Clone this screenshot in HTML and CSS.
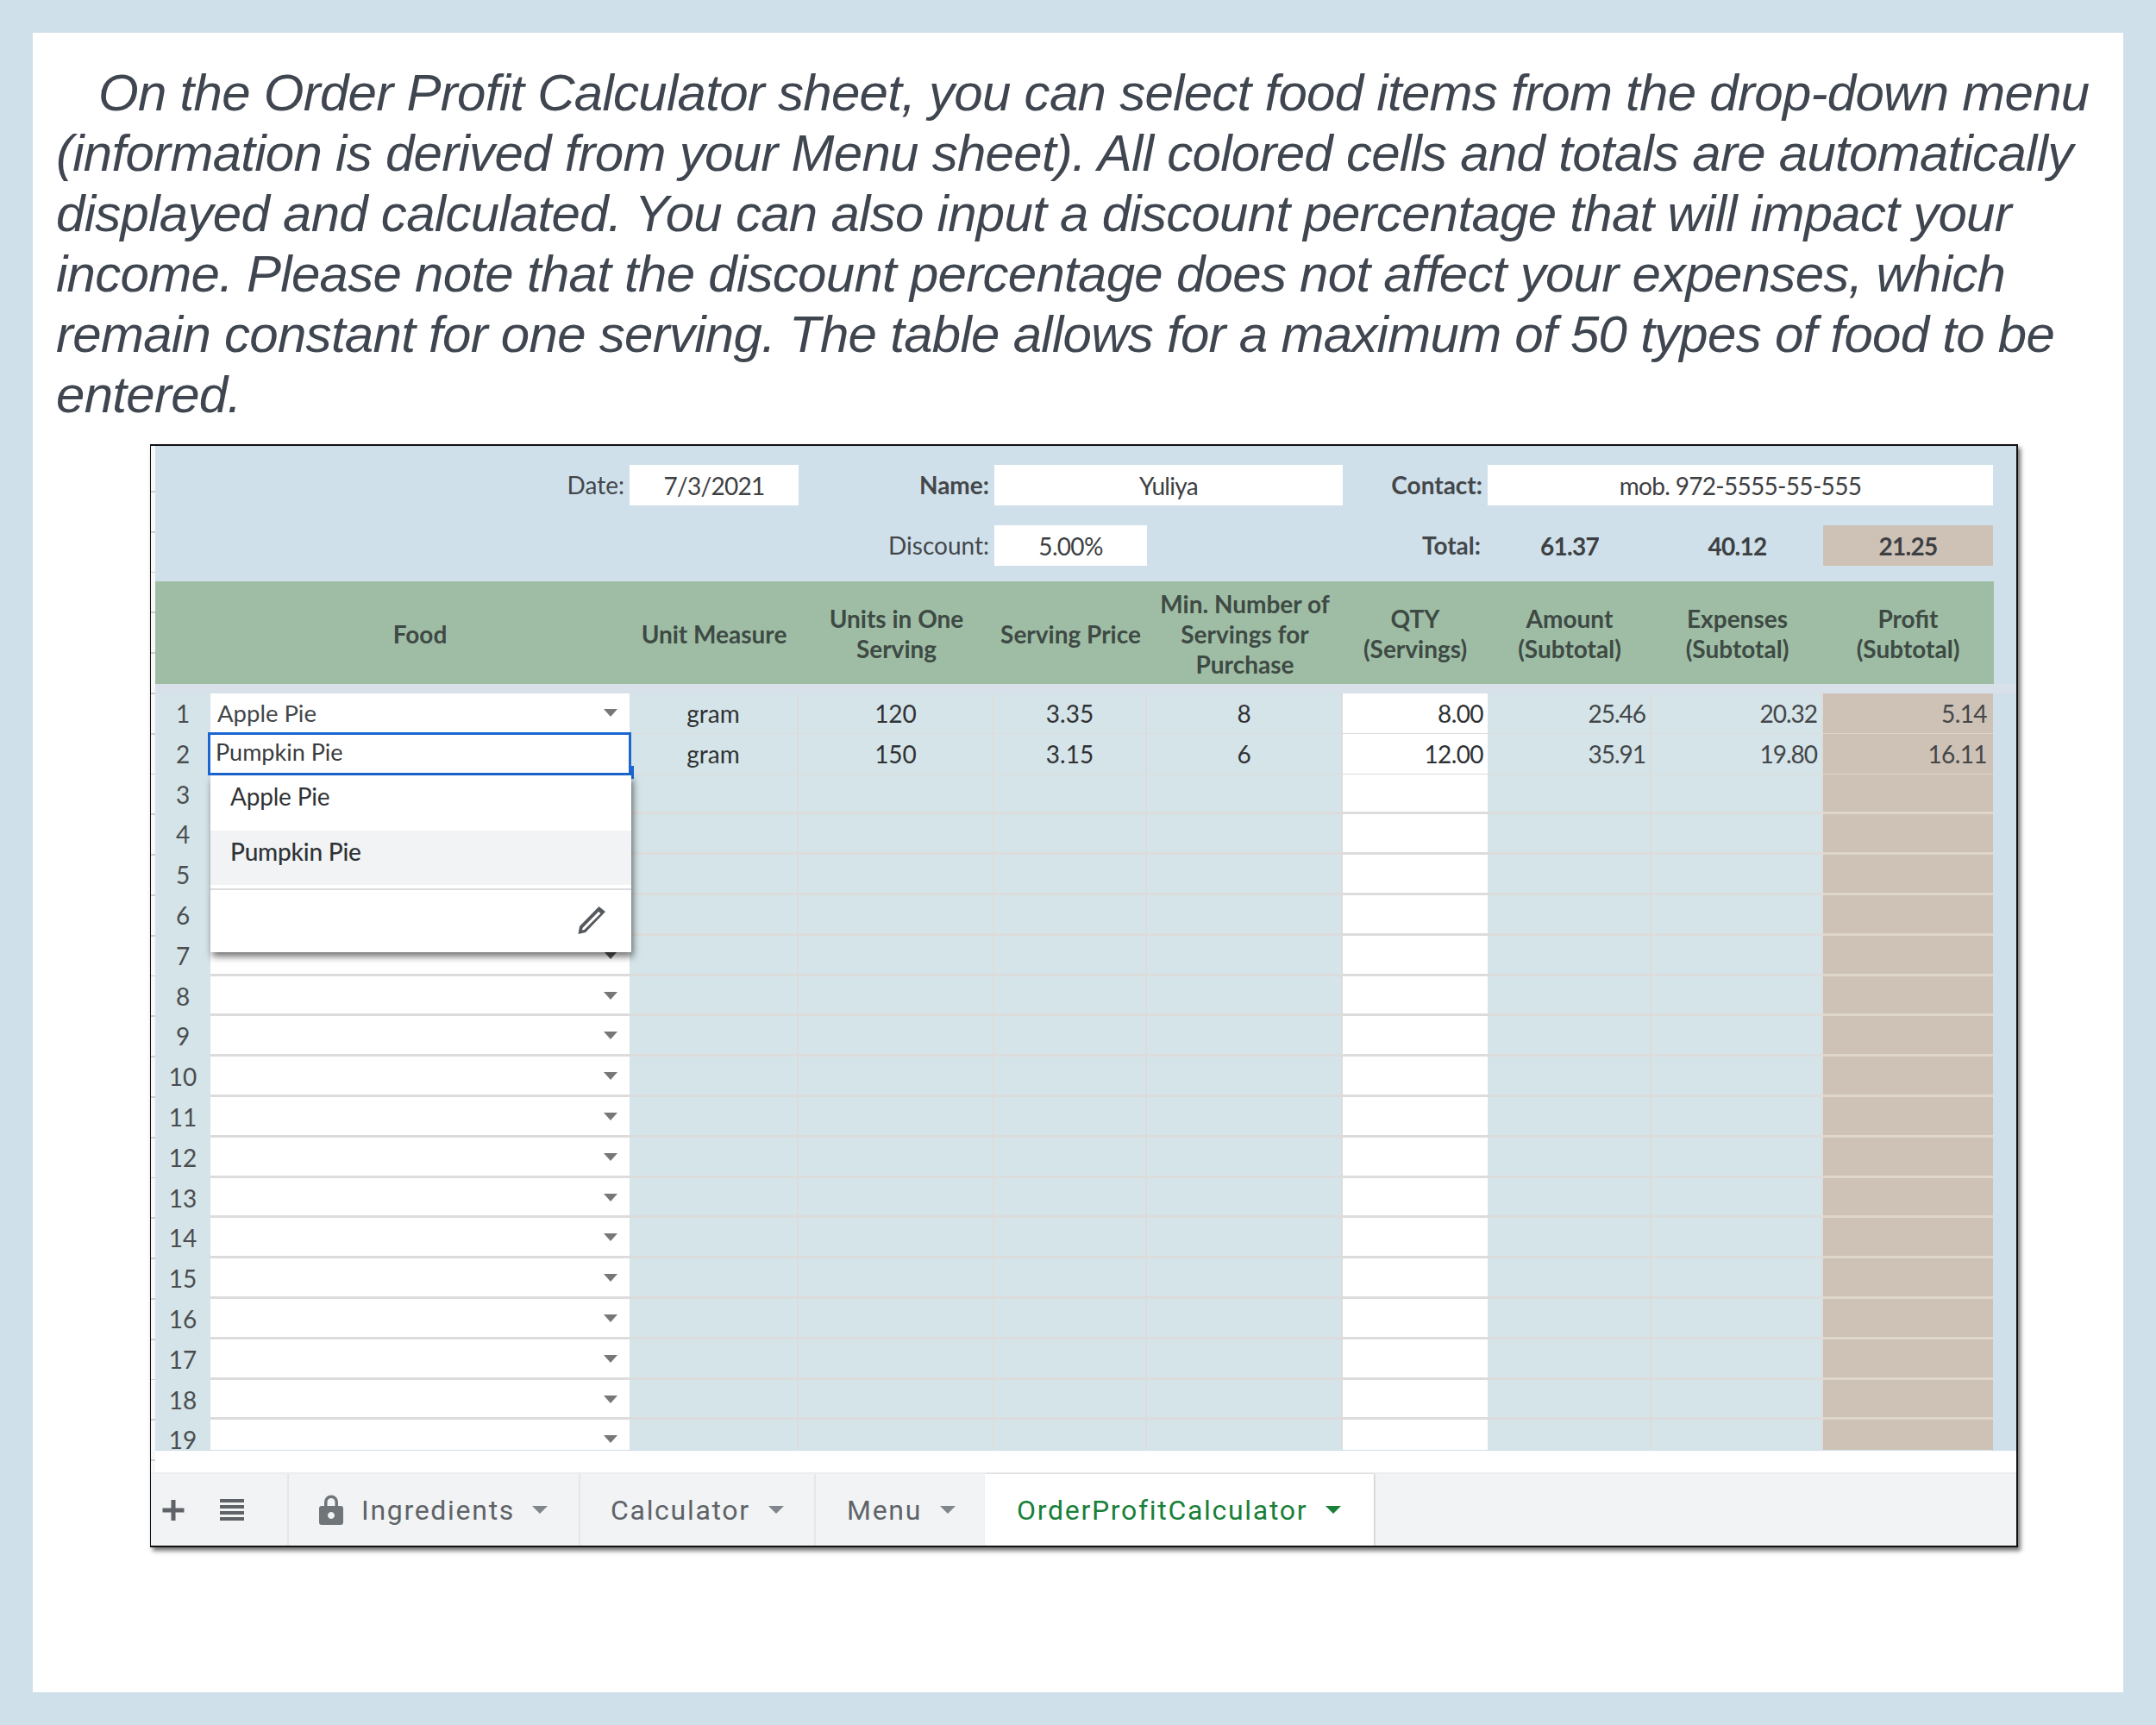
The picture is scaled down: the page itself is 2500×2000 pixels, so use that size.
FILE: index.html
```html
<!DOCTYPE html>
<html lang="en">
<head>
<meta charset="utf-8">
<title>Order Profit Calculator</title>
<link rel="stylesheet" href="styles.css">
</head>
<body>
<main class="page">
  <p class="intro">On the Order Profit Calculator sheet, you can select food items from the drop-down menu<br>(information is derived from your Menu sheet). All colored cells and totals are automatically<br>displayed and calculated. You can also input a discount percentage that will impact your<br>income. Please note that the discount percentage does not affect your expenses, which<br>remain constant for one serving. The table allows for a maximum of 50 types of food to be<br>entered.</p>
  <section class="window">
    <div class="sheet">
      <div class="grid info info-1">
        <div class="c2 label">Date:</div><div class="box">7/3/2021</div>
        <div class="label bold">Name:</div><div class="box wide-name">Yuliya</div>
        <div class="label bold">Contact:</div><div class="box wide-contact">mob. 972-5555-55-555</div>
      </div>
      <div class="grid info info-2">
        <div class="c4 label">Discount:</div><div class="box">5.00%</div>
        <div class="c6 label bold total-label">Total:</div><div class="plain bold">61.37</div><div class="plain bold">40.12</div><div class="plain bold brown">21.25</div>
      </div>
      <div class="grid head">
        <div class="c2">Food</div><div>Unit Measure</div><div>Units in One<br>Serving</div><div>Serving Price</div><div>Min. Number of<br>Servings for<br>Purchase</div><div>QTY<br>(Servings)</div><div>Amount<br>(Subtotal)</div><div>Expenses<br>(Subtotal)</div><div>Profit<br>(Subtotal)</div>
      </div>
      <div class="band"></div>
      <div class="rows">
        <div class="grid row"><div class="n">1</div><div class="f">Apple Pie<i class="arrow"></i></div><div class="m">gram</div><div class="m">120</div><div class="m">3.35</div><div class="m">8</div><div class="q">8.00</div><div class="a">25.46</div><div class="a">20.32</div><div class="p">5.14</div></div>
        <div class="grid row"><div class="n">2</div><div class="f"></div><div class="m">gram</div><div class="m">150</div><div class="m">3.15</div><div class="m">6</div><div class="q">12.00</div><div class="a">35.91</div><div class="a">19.80</div><div class="p">16.11</div></div>
        <div class="grid row"><div class="n">3</div><div class="f"></div><div class="m"></div><div class="m"></div><div class="m"></div><div class="m"></div><div class="q"></div><div class="a"></div><div class="a"></div><div class="p"></div></div>
        <div class="grid row"><div class="n">4</div><div class="f"></div><div class="m"></div><div class="m"></div><div class="m"></div><div class="m"></div><div class="q"></div><div class="a"></div><div class="a"></div><div class="p"></div></div>
        <div class="grid row"><div class="n">5</div><div class="f"></div><div class="m"></div><div class="m"></div><div class="m"></div><div class="m"></div><div class="q"></div><div class="a"></div><div class="a"></div><div class="p"></div></div>
        <div class="grid row"><div class="n">6</div><div class="f"></div><div class="m"></div><div class="m"></div><div class="m"></div><div class="m"></div><div class="q"></div><div class="a"></div><div class="a"></div><div class="p"></div></div>
        <div class="grid row"><div class="n">7</div><div class="f"><i class="arrow dark"></i></div><div class="m"></div><div class="m"></div><div class="m"></div><div class="m"></div><div class="q"></div><div class="a"></div><div class="a"></div><div class="p"></div></div>
        <div class="grid row"><div class="n">8</div><div class="f"><i class="arrow"></i></div><div class="m"></div><div class="m"></div><div class="m"></div><div class="m"></div><div class="q"></div><div class="a"></div><div class="a"></div><div class="p"></div></div>
        <div class="grid row"><div class="n">9</div><div class="f"><i class="arrow"></i></div><div class="m"></div><div class="m"></div><div class="m"></div><div class="m"></div><div class="q"></div><div class="a"></div><div class="a"></div><div class="p"></div></div>
        <div class="grid row"><div class="n">10</div><div class="f"><i class="arrow"></i></div><div class="m"></div><div class="m"></div><div class="m"></div><div class="m"></div><div class="q"></div><div class="a"></div><div class="a"></div><div class="p"></div></div>
        <div class="grid row"><div class="n">11</div><div class="f"><i class="arrow"></i></div><div class="m"></div><div class="m"></div><div class="m"></div><div class="m"></div><div class="q"></div><div class="a"></div><div class="a"></div><div class="p"></div></div>
        <div class="grid row"><div class="n">12</div><div class="f"><i class="arrow"></i></div><div class="m"></div><div class="m"></div><div class="m"></div><div class="m"></div><div class="q"></div><div class="a"></div><div class="a"></div><div class="p"></div></div>
        <div class="grid row"><div class="n">13</div><div class="f"><i class="arrow"></i></div><div class="m"></div><div class="m"></div><div class="m"></div><div class="m"></div><div class="q"></div><div class="a"></div><div class="a"></div><div class="p"></div></div>
        <div class="grid row"><div class="n">14</div><div class="f"><i class="arrow"></i></div><div class="m"></div><div class="m"></div><div class="m"></div><div class="m"></div><div class="q"></div><div class="a"></div><div class="a"></div><div class="p"></div></div>
        <div class="grid row"><div class="n">15</div><div class="f"><i class="arrow"></i></div><div class="m"></div><div class="m"></div><div class="m"></div><div class="m"></div><div class="q"></div><div class="a"></div><div class="a"></div><div class="p"></div></div>
        <div class="grid row"><div class="n">16</div><div class="f"><i class="arrow"></i></div><div class="m"></div><div class="m"></div><div class="m"></div><div class="m"></div><div class="q"></div><div class="a"></div><div class="a"></div><div class="p"></div></div>
        <div class="grid row"><div class="n">17</div><div class="f"><i class="arrow"></i></div><div class="m"></div><div class="m"></div><div class="m"></div><div class="m"></div><div class="q"></div><div class="a"></div><div class="a"></div><div class="p"></div></div>
        <div class="grid row"><div class="n">18</div><div class="f"><i class="arrow"></i></div><div class="m"></div><div class="m"></div><div class="m"></div><div class="m"></div><div class="q"></div><div class="a"></div><div class="a"></div><div class="p"></div></div>
        <div class="grid row last"><div class="n">19</div><div class="f"><i class="arrow"></i></div><div class="m"></div><div class="m"></div><div class="m"></div><div class="m"></div><div class="q"></div><div class="a"></div><div class="a"></div><div class="p"></div></div>
      </div>
      <div class="editor">Pumpkin Pie</div>
      <div class="handle"></div>
      <div class="dropdown">
        <div class="opt">Apple Pie</div>
        <div class="opt hover">Pumpkin Pie</div>
        <div class="edit">
          <svg class="pencil" width="34" height="34" viewBox="0 0 34 34"><path d="M25.500 1 L33 7 L10 31 L1.500 33 L3 24 Z M25 7 L6.500 26 L6 28.500 L8.500 28 L27.500 9 Z" fill="#55595d" fill-rule="evenodd"/></svg>
        </div>
      </div>
    </div>
    <footer class="tabs">
      <div class="tools">
        <svg width="26" height="24" viewBox="0 0 26 24"><path d="M10.500 0h5v9.500h10v5h-10v9.500h-5v-9.500h-10v-5h10z" fill="#5f6368"/></svg>
        <svg width="30" height="26" viewBox="0 0 30 26"><path d="M1 0h28v4H1zM1 7h28v4H1zM1 14h28v4H1zM1 21h28v4H1z" fill="#5f6368"/></svg>
      </div>
      <div class="tab tab-ing">
        <svg class="lock" width="28" height="35" viewBox="0 0 28 35"><path d="M6 13V8.500a8 8 0 0 1 16 0V13h3a3 3 0 0 1 3 3v16a3 3 0 0 1-3 3H3a3 3 0 0 1-3-3V16a3 3 0 0 1 3-3zM9.500 13h9V8.500a4.500 4.500 0 0 0-9 0z M14 20a4 4 0 1 0 .01 0z" fill="#6f7579" fill-rule="evenodd"/></svg>
        <span>Ingredients</span><i class="tab-arrow"></i>
      </div>
      <div class="tab tab-calc"><span>Calculator</span><i class="tab-arrow"></i></div>
      <div class="tab tab-menu"><span>Menu</span><i class="tab-arrow"></i></div>
      <div class="tab active"><span>OrderProfitCalculator</span><i class="tab-arrow"></i></div>
    </footer>
  </section>
</main>
</body>
</html>
```

FILE: styles.css
```css
* { box-sizing: border-box; }
html, body { margin: 0; padding: 0; }
body { width: 2500px; height: 2000px; background: #cfe0ea; padding: 38px; }
.page { width: 2424px; height: 1924px; background: #fff; padding: 0 0 0 27px; overflow: hidden; }
.intro {
  margin: 0;
  padding-top: 35px;
  height: 477px;
  font: italic 60px/70px "Liberation Sans", Arial, sans-serif;
  letter-spacing: -0.72px;
  color: #3f4650;
  text-indent: 49px;
  white-space: nowrap;
}
.window {
  margin-left: 109px;
  width: 2166px;
  height: 1279px;
  border: solid #111;
  border-width: 2px 2px 2px 1px;
  background: repeating-linear-gradient(#f8f8f8 0 45px, #cfcfcf 45px 46.800px) 0 7px;
  box-shadow: 3px 4px 5px rgba(0,0,0,.55);
  display: flex;
  flex-direction: column;
  font-family: Lato, "Liberation Sans", sans-serif;
  color: #3d4043;
}
.sheet {
  position: relative;
  height: 1191px;
  margin-left: 5px;
  padding-top: 21px;
  background: linear-gradient(#cfe0ea, #cfe0ea) no-repeat;
  background-size: 100% 1165px;
  background-color: #fff;
  overflow: hidden;
}
.grid {
  display: grid;
  grid-template-columns: 64px 486px 196px 227px 177px 227px 168px 190px 199px 197px;
  font-size: 28px;
}
.c2 { grid-column: 2; }
.c4 { grid-column: 4; }
.c6 { grid-column: 6 / span 2; }
.info { align-items: center; height: 47px; }
.info-2 { margin-top: 23px; }
.label { text-align: right; padding-right: 6px; line-height: 49px; color: #44474a; }
.bold { font-weight: 700; }
.box, .plain { background: #fff; height: 47px; line-height: 49px; text-align: center; letter-spacing: -0.7px; }
.plain { background: transparent; }
.brown { background: #cec2b6; }
.total-label { padding-right: 8px; }
.wide-name { grid-column: 5 / span 2; }
.info-1 > .label.bold:nth-of-type(3) { grid-column: 4; }
.info-1 > .label.bold:nth-of-type(5) { grid-column: 7; }
.wide-contact { grid-column: 8 / span 3; }
.head {
  margin-top: 19px;
  height: 119px;
  background: #9fbda5;
  width: 2132px;
  font-weight: 700;
  line-height: 35px;
  text-align: center;
  padding-top: 3px;
}
.head > div { display: flex; align-items: center; justify-content: center; color: #3e4a44; }
.band { height: 11px; background: #d8e0ea; }
.row { height: 46.800px; line-height: 46px; }
.row > div { border-bottom: 3px solid #dddcdc; color: #2f3235; }
.row.last { height: 35px; overflow: hidden; }
.row.last > div { border-bottom: 0; }
.n { text-align: center; background: #d5e4e8; color: #4a4d50 !important; border-bottom: 0 !important; }
.f { position: relative; background: #fff; padding-left: 8px; font-size: 27.500px; color: #44474a !important; }
.m { background: #d5e4e8; text-align: center; border-right: 2px solid #dddcdc; }
.q { background: #fff; text-align: right; padding-right: 5px; letter-spacing: -0.6px; }
.a { background: #d5e4e8; text-align: right; padding-right: 5px; border-right: 2px solid #dddcdc; letter-spacing: -1px; color: #44474a !important; }
.p { background: #cec2b6; text-align: right; padding-right: 7px; letter-spacing: -0.6px; border-bottom-color: #dfd6cc !important; color: #44474a !important; }
.arrow { position: absolute; right: 14px; top: 18px; border: solid transparent; border-width: 9px 8px 0; border-top-color: #777; }
.arrow.dark { border-top-color: #555; }
.editor {
  position: absolute;
  left: 61px;
  top: 332px;
  width: 491px;
  height: 50px;
  border: 3px solid #1a66d2;
  background: #fff;
  padding-left: 6px;
  font-size: 27px;
  line-height: 40px;
  color: #3a3d40;
}
.handle { position: absolute; left: 551px; top: 371px; width: 4px; height: 15px; background: #1a66d2; }
.dropdown {
  position: absolute;
  left: 64px;
  top: 382px;
  width: 488px;
  height: 205px;
  background: #fff;
  box-shadow: 2px 5px 8px rgba(0,0,0,.55);
  font-size: 28px;
  color: #303336;
}
.opt { height: 64px; line-height: 48px; padding-left: 23px; letter-spacing: -0.2px; }
.opt.hover { height: 63px; background: #f1f3f4; font-weight: 500; }
.edit { margin-top: 4px; border-top: 2px solid #dadcde; height: 74px; display: flex; justify-content: flex-end; padding: 18px 29px 0 0; }
.tabs {
  height: 85px;
  flex: none;
  background: #f1f3f4;
  display: flex;
  font-family: Roboto, sans-serif;
  font-size: 32px;
  letter-spacing: 1.7px;
  color: #5f6368;
  border-top: 2px solid #eceef0;
}
.tools { width: 158px; display: flex; gap: 40px; align-items: center; padding: 0 0 0 13px; }
.tab { position: relative; height: 100%; display: flex; align-items: center; border-left: 2px solid #e4e6e8; }
.tab-ing { width: 338px; padding-left: 35px; gap: 21px; }
.tab-calc { width: 273px; padding-left: 35px; }
.tab-menu { width: 198px; padding-left: 36px; }
.tab .tab-arrow { margin-left: 21px; border: solid transparent; border-width: 9px 9px 0; border-top-color: #80868b; }
.tab-ing .tab-arrow { margin-left: -1px; }
.tab.active { width: 451px; background: #fff; padding-left: 37px; color: #188038; border-left: 0; box-shadow: 1px 0 2px rgba(0,0,0,.2); }
.tab.active .tab-arrow { border-top-color: #188038; }
.lock { flex: none; }
```
